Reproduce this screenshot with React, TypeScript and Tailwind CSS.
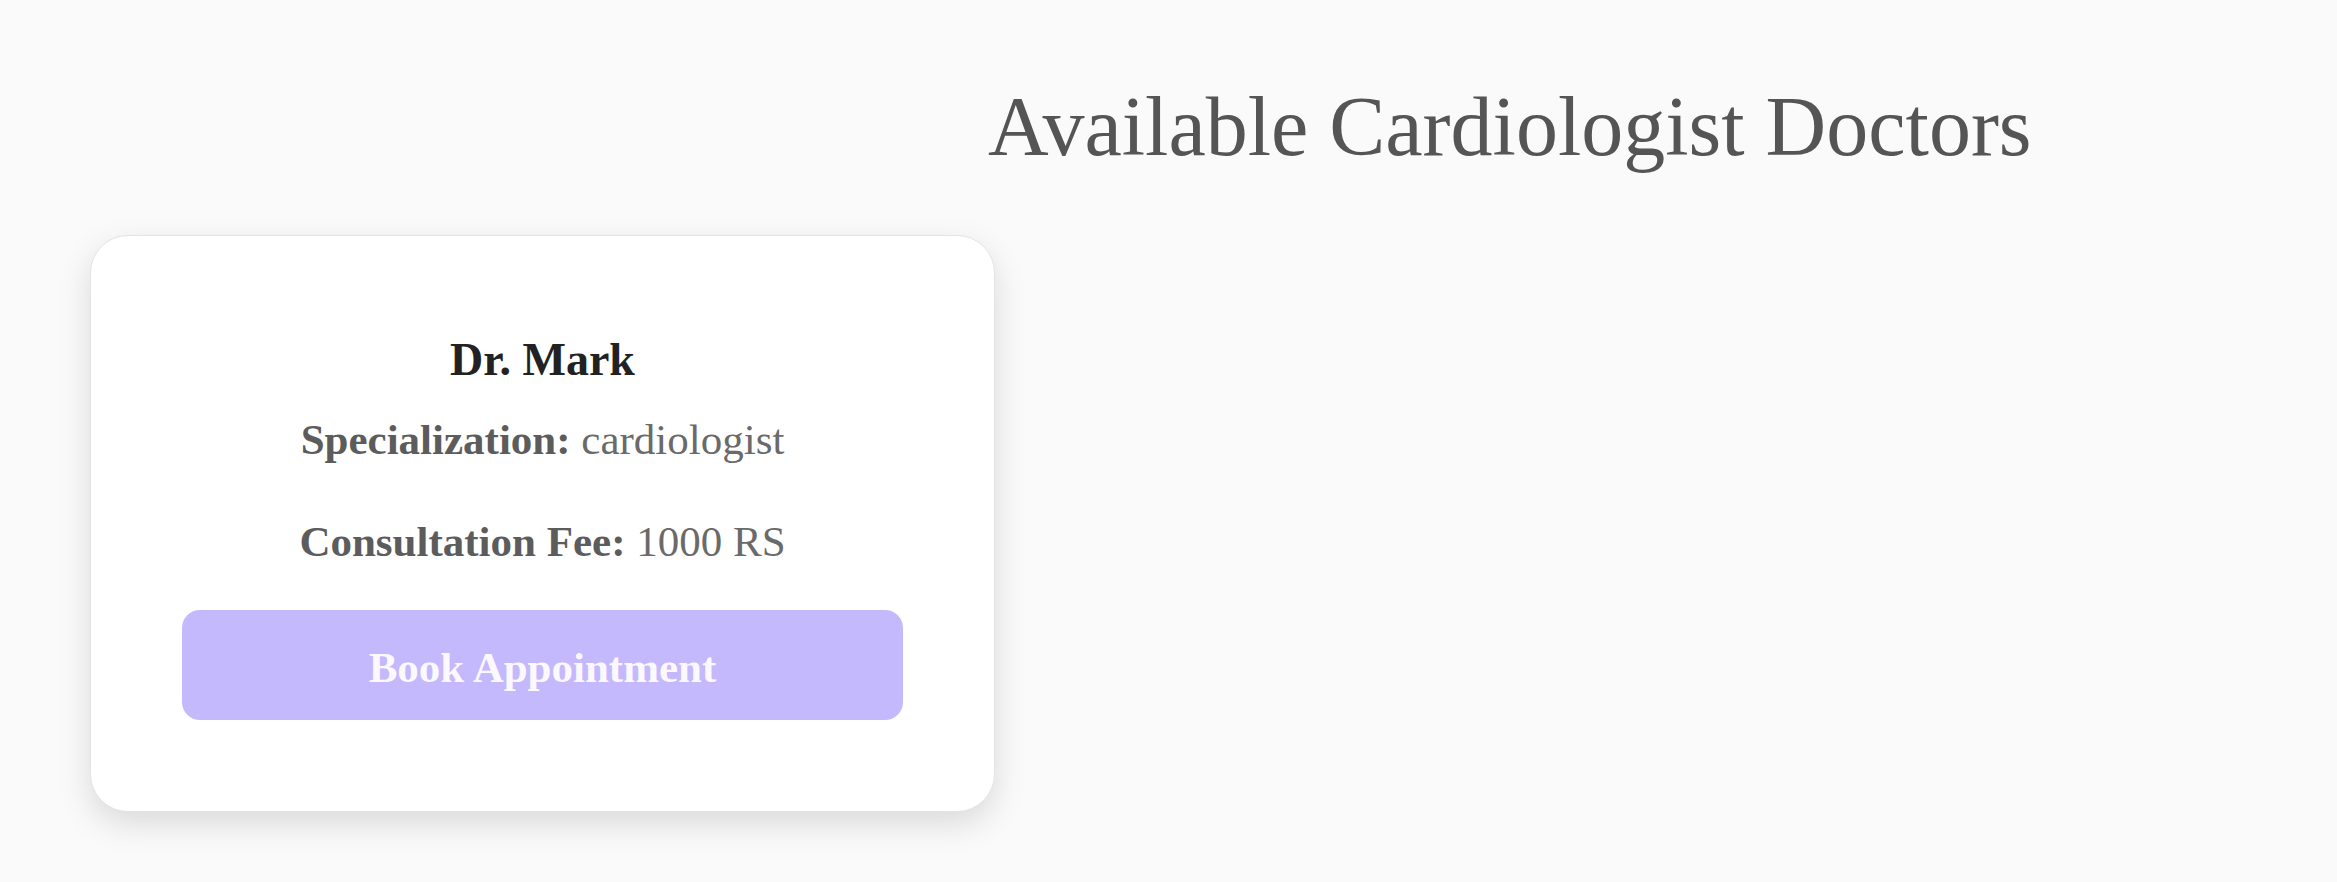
import React from "react";

export default function App() {
  return (
    <div
      className="min-h-[882px] w-full bg-[#fafafa] pt-[85px]"
      style={{ fontFamily: '"Liberation Serif", "Times New Roman", serif' }}
    >
      <h1 className="ml-[988px] text-[84px] leading-[84px] font-normal text-[#555555] whitespace-nowrap">
        Available Cardiologist Doctors
      </h1>
      <div className="mt-[66px] ml-[90px] flex w-[905px] flex-col items-center rounded-[38px] border border-[#e4e4e4] bg-white px-[91px] pt-[101px] pb-[91px] shadow-[0_12px_32px_rgba(0,0,0,0.13)]">
        <h3 className="text-[46px] leading-[46px] font-bold text-[#222222] whitespace-nowrap">
          Dr. Mark
        </h3>
        <p className="mt-[35px] text-[43px] leading-[43px] text-[#6a6a6a] whitespace-nowrap">
          <span className="font-bold text-[#5c5c5c]">Specialization:</span> cardiologist
        </p>
        <p className="mt-[59px] text-[43px] leading-[43px] text-[#6a6a6a] whitespace-nowrap">
          <span className="font-bold text-[#5c5c5c]">Consultation Fee:</span> 1000 RS
        </p>
        <button className="mt-[47px] w-full rounded-[18px] bg-[#c4b9fc] pt-[36px] pb-[31px] text-[43px] leading-[43px] font-bold text-[#fbf8ff]">
          Book Appointment
        </button>
      </div>
    </div>
  );
}
